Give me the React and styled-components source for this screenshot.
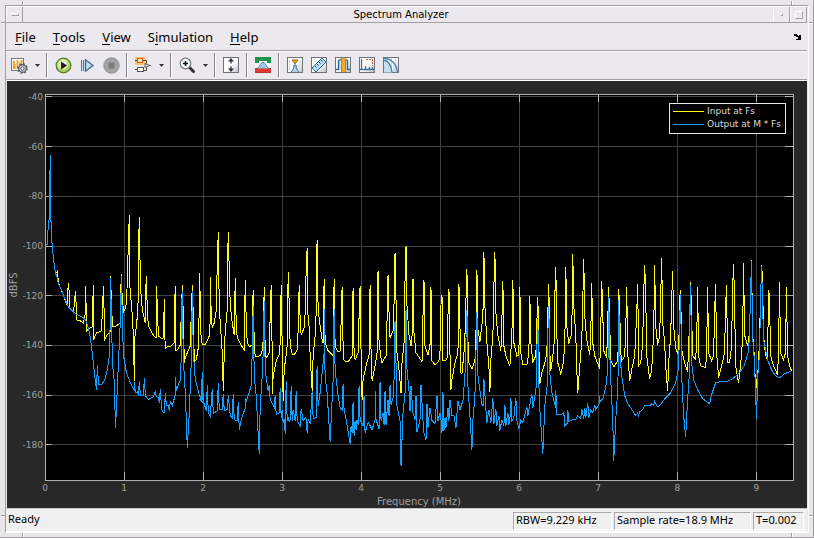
import React from "react";
import styled, { createGlobalStyle } from "styled-components";

const GlobalStyle = createGlobalStyle`
  * { box-sizing: border-box; }
  body { margin: 0; background: #e6e4e6; }
`;

const shade = "#a09da3";
const face = "#ebe8ee";

const Frame = styled.main`
  position: relative;
  display: flex;
  min-height: 100vh;
  padding: 5px 4px 4px 5px;
  border-right: 1px solid ${shade};
  border-bottom: 1px solid ${shade};
  background: #e8e6e9;
  font-family: "Noto Sans", sans-serif;
  color: #000;
`;

const Notch = styled.i`
  position: absolute;
  width: ${(p) => (p.$across ? 4 : 2)}px;
  height: ${(p) => (p.$across ? 2 : 4)}px;
  top: ${(p) => p.$top};
  left: ${(p) => p.$left};
  background: linear-gradient(${(p) => (p.$across ? "180deg" : "90deg")}, ${shade} 50%, #fff 50%);
`;

const Window = styled.div`
  flex: 1;
  min-width: 0;
  display: flex;
  flex-direction: column;
  border: 1px solid #fff;
  border-top-color: ${shade};
  border-left-color: ${shade};
  padding-right: 1px;
  background: ${face};
`;

const TitleBar = styled.header`
  display: flex;
  height: 17px;
  border-top: 1px solid #fff;
  border-bottom: 1px solid ${shade};
`;

const Title = styled.h1`
  flex: 1;
  margin: 0;
  padding-left: 6px;
  text-align: center;
  font: 10px/15px "DejaVu Sans", sans-serif;
`;

const FrameButton = styled.button`
  display: grid;
  place-items: center;
  width: 17px;
  height: 15px;
  padding: 0;
  border: 0 solid;
  border-width: 0 1px;
  border-color: #fff ${shade} #fff #fff;
  background: ${face};
`;

const Glyph = styled.span`
  width: ${(p) => p.$w}px;
  height: ${(p) => p.$h}px;
  border: 1px solid;
  border-color: #fff ${shade} ${shade} #fff;
`;

const MenuBar = styled.nav`
  display: flex;
  align-items: center;
  height: 28px;
  padding: 0 6px 0 9px;
  gap: 17px;
  border-bottom: 1px solid ${shade};
`;

const MenuItem = styled.button`
  padding: 0;
  border: 0;
  background: none;
  font: 13px/20px "Noto Sans", sans-serif;
  color: #000;
  u {
    display: inline-block;
    line-height: 14px;
    text-decoration: none;
    border-bottom: 1px solid #000;
  }
`;

const DockButton = styled(MenuItem)`
  margin-left: auto;
  display: grid;
`;

const ToolBar = styled.div`
  display: flex;
  align-items: center;
  height: 30px;
  padding: 0 0 2px 1px;
  border-top: 1px solid #fff;
  border-bottom: 1px solid #fff;
  box-shadow: inset 0 -1px ${shade};
`;

const Tool = styled.button`
  display: grid;
  place-items: center;
  width: ${(p) => (p.$menu ? 12 : 24)}px;
  height: 24px;
  padding: 0;
  border: 0;
  background: none;
`;

const Separator = styled.span`
  width: 2px;
  height: 24px;
  margin: 0 3px;
  border-left: 1px solid #858288;
  border-right: 1px solid #fff;
`;

const Scope = styled.section`
  flex: 1;
  display: grid;
  grid-template: 13px minmax(200px, 1fr) 28px / 38px 1fr 14px;
  margin-left: 1px;
  background: #282828;
`;

const Axis = styled.svg`
  display: block;
  width: 100%;
  height: 100%;
  min-height: 0;
  overflow: visible;
  font: 9px "DejaVu Sans", sans-serif;
  fill: #a0a0a0;
  grid-area: ${(p) => p.$area};
`;

const Plot = styled.div`
  grid-area: 2 / 2;
  position: relative;
  background: #000;
`;

const Canvas = styled.svg`
  position: absolute;
  inset: 0;
  width: 100%;
  height: 100%;
  overflow: visible;
  shape-rendering: crispEdges;
`;

const Legend = styled.ul`
  position: absolute;
  top: 9px;
  right: 7px;
  margin: 0;
  padding: 1px 4px 2px 3px;
  list-style: none;
  border: 1px solid #e6e6e6;
  background: #000;
  color: #ddd;
  font: 9px/13px "DejaVu Sans", sans-serif;
`;

const LegendItem = styled.li`
  display: flex;
  align-items: center;
  gap: 3px;
  &::before {
    content: "";
    width: 31px;
    height: 1px;
    background: ${(p) => p.$color};
  }
`;

const StatusBar = styled.footer`
  display: flex;
  align-items: flex-start;
  gap: 2px;
  height: 24px;
  padding: 3px 3px 0 2px;
  border-top: 1px solid #c4c2c6;
  border-bottom: 1px solid #fff;
  background: #f0f0f0;
  font-size: 11px;
  line-height: 14px;
`;

const StatusText = styled.span`
  flex: 1;
`;

const StatusBox = styled.span`
  width: ${(p) => p.$w}px;
  height: 18px;
  padding-left: 2px;
  border: 1px solid;
  border-color: #aaa #fff #fff #aaa;
  white-space: nowrap;
`;

/* Trace samples, in runs of "x,y" pairs on a grid three times finer than the plot. */
const inputRuns = [
  [0, 85, "137,480 142,478 143,450 146,420 149,390 149,306 152,212 152,410 155,412 155,462 158,488 161,527 164,543 167,567 173,559 173,570 176,585"],
  [0, 280, "176,10 182,25 190,45 197,68 201,78 203,40 206,10 207,50 209,85 220,97 224,70 227,33 228,90 230,120 240,125 251,130 256,100 257,18 259,110 260,155 266,147 276,143 278,95 281,15 281,182 285,165 290,160 303,153 308,95 311,18 312,130 314,185 320,168 330,158 332,-12 335,60 337,142 350,138 360,130 362,60 364,-18 365,25 368,50 370,100 376,85 380,70 383,0 386,-120 389,-195 389,0 392,40 396,110 400,170 403,304 404,185 408,140 412,110 414,50 416,-90 419,-189 420,10 424,60 428,90 434,118 436,130 437,60 440,-10 442,100 446,138 455,158 464,172 470,176 470,20 473,80 474,170 486,178 491,175 493,58 494,130 496,208 503,203 515,200 522,190 524,100 526,18 527,215 533,212 540,195 542,170 545,110 548,15 549,110 552,250 556,235 562,220 572,200 574,100 577,15 579,110 582,247 588,240 594,205 597,80 599,-20"],
  [200, 220, "0,235 2,330 8,375 16,375 28,350 30,300 31,172 34,290 37,325 43,310 50,270 52,130 55,37 57,265 62,310 66,400 70,515 73,400 77,335 81,270 82,170 86,37 87,150 90,260 96,310 104,345 107,175 109,320 113,355 122,373 134,390 137,180 139,300 142,370 148,383 156,375 158,290 160,210 162,370 166,413 180,408 188,395 190,360 193,202 195,400 199,415 208,400 212,290 214,195 216,400 218,523 221,470 230,425 238,405 242,370 244,195 246,380 250,543 252,450 258,405 263,380 265,157 268,250 271,380 276,403 284,405 292,390 296,330 298,195 301,300 304,345 312,325 317,280 318,150 322,85 323,260 328,325 332,410 337,515 340,410 345,350 349,280 350,155 353,61 355,270 361,320 366,360 371,370 374,178 376,370 385,393 401,410 404,178 406,380 414,398 422,395 425,310 427,202 430,380 433,425 444,427 456,410 458,310 460,205 462,400 467,420 475,400 478,290 481,198 484,400 487,540 490,480 498,440 508,405 511,195 514,400 518,485 525,440 531,400 533,250 536,153 537,370 543,415 548,430 560,410 562,300 565,165 568,280 571,355 579,335 584,250 586,100 589,240 592,400 598,450 604,520 608,430 614,370 617,180"],
  [400, 220, "19,78 22,260 27,345 35,380 38,350 40,178 43,340 50,400 66,427 70,290 73,180 76,380 86,405 92,380 94,202 96,400 98,425 106,436 118,425 123,370 125,255 127,225 129,375 131,423 142,420 146,290 149,208 152,400 154,512 158,480 166,430 176,400 178,192 182,320 184,460 187,463 192,400 197,350 200,240 202,148 205,360 209,430 217,447 226,425 230,350 232,150 236,330 242,367 250,290 253,97 257,260 262,370 267,440 270,517 275,420 280,350 283,200 286,97 290,280 294,350 303,393 308,300 310,183 313,380 320,410 332,440 338,350 340,180 343,370 351,410 358,405 361,202 364,400 370,437 382,436 388,400 391,228 395,370 400,427 408,410 413,310 415,232 418,380 422,492 427,460 436,430 442,400 446,280 448,193 450,400 454,455 460,410 465,350 467,230 469,142 472,340 476,430 484,463 490,440 496,380 499,142 503,320 509,373 516,340 520,103 524,260 528,350 532,450 536,520 540,440 546,360 551,240 553,118 557,290 563,360 571,405 575,340 577,190 580,370 586,410"],
  [600, 220, "0,447 4,330 7,183 10,280 13,395 22,415 26,300 28,202 31,320 34,425 44,443 54,425 57,330 58,208 62,270 65,400 68,425 76,410 80,330 82,202 85,400 90,485 96,450 106,410 112,280 115,192 118,440 124,430 131,370 134,220 136,136 139,220 142,410 152,478 158,450 163,340 166,136 169,320 176,375 182,350 187,115 190,310 196,370 200,440 206,515 209,430 214,350 218,240 220,153 224,320 230,385 238,410 241,235 244,210 247,390 255,430 266,458 271,300 274,187 277,290 281,410 290,420 293,370 295,202 298,410 304,440 318,445 323,400 325,202 329,400 336,425 344,410 347,280 349,193 353,400 358,475 366,440 376,400 379,260 382,195 385,430 390,430 397,380 400,205 403,133 406,240 410,440 418,490 425,440 431,360 433,130 436,345 445,378 450,340 454,215 457,121 460,340 467,420 470,517 477,440 482,350 485,240 487,136 490,175 494,350 500,405 506,420 508,210 511,230 514,410 524,440 534,467 539,400 541,187 544,400 553,420 560,400 562,202 565,410 572,440 578,455"],
];

const outputRuns = [
  [0, 85, "137,480 142,478 143,450 146,420 149,390 149,306 152,210 152,410 155,412 155,462 158,488 161,527 164,543 167,567 170,570 173,583"],
  [0, 280, "176,12 184,32 194,55 206,82 220,97 232,107 250,115 256,120 266,145 272,175 278,225 284,280 290,330 293,257 296,315 303,317 312,305 322,270 328,225 331,100 332,-5 335,100 338,250 343,310 346,445 350,390 356,250 361,120 364,-10 366,130 370,225 380,280 390,310 403,335 404,308 405,340 412,338 416,350 418,305 421,350 430,350 433,295 436,350 446,360 460,352 467,335 469,352 476,355 478,370 481,328 484,380 488,398 494,400 496,340 499,380 505,380 509,395 512,363 516,380 526,345 527,292 530,335 540,300 544,230 545,100 548,35 550,240 556,340 562,505 567,400 573,240 577,35 580,220 587,300 598,345 604,360 607,277 611,370"],
  [200, 220, "0,540 7,540 8,457 10,545 18,575 22,495 25,580 31,592 37,508 41,583 53,575 55,490 58,570 68,572 70,522 73,575 82,570 86,530 90,590 97,595 100,522 104,600 112,605 115,548 118,630 126,590 137,568 137,535 140,548 148,520 153,495 157,400 160,260 163,470 170,530 178,703 180,560 187,470 190,400 193,245 196,455 206,515 208,495 212,540 222,565 225,525 230,587 238,580 241,505 244,595 247,570 250,610 253,598 256,642 259,485 262,605 265,593 268,608 271,600 274,498 278,605 281,570 286,605 289,515 293,605 301,618 304,567 310,605 316,595 320,600 322,640 325,600 331,610 337,515 340,598 348,595 349,513 352,438 355,560 362,520 368,460 373,400 374,267 377,475 383,520 390,667 397,540 400,480 403,267 407,450 416,530 422,565 427,570 430,493 433,570 440,600 451,672 454,620 458,640 460,547 463,650 466,605 469,630 472,600 475,615 478,500 482,600 490,620 493,530 497,640 505,610 511,620 517,632 526,600 526,513 530,600 538,628 542,487 545,605 550,580 553,615 556,515 560,615 566,540 568,590 571,497 575,555 580,535 584,480 587,305 591,560 598,590"],
  [400, 220, "1,603 4,740 9,580 15,520 19,270 22,450 28,515 31,575 34,500 37,540 40,580 47,600 49,530 53,637 60,600 65,495 69,605 73,640 79,660 82,553 86,625 91,565 97,605 106,612 112,528 115,605 120,580 125,600 127,640 130,518 133,635 137,595 140,625 145,565 148,605 152,540 156,590 163,590 169,625 175,545 180,572 190,545 196,470 200,360 202,270 206,500 212,590 218,690 221,600 227,530 232,277 236,470 246,555 254,560 254,477 258,570 263,610 268,570 275,610 280,535 283,612 290,568 293,618 298,590 301,633 307,600 313,618 316,555 320,620 325,580 328,615 331,600 334,535 337,605 344,595 349,535 352,605 358,628 364,600 371,610 382,563 385,590 397,522 400,565 406,530 412,490 413,390 415,298 418,490 422,570 430,703 437,560 444,480 445,340 448,258 451,460 457,520 468,565 470,515 473,585 485,585 493,580 496,620 506,610 506,570 509,608 520,600 530,600 536,590 544,597 548,568 552,597 556,565 560,595 565,550 568,595 575,570 580,580 585,555 590,570 600,550 601,530"],
  [600, 220, "2,548 10,538 20,505 25,450 27,320 28,232 31,400 34,480 40,600 43,725 49,600 54,510 57,370 58,240 61,400 66,470 75,530 86,553 100,575 110,588 114,580 117,590 120,578 130,570 137,558 152,560 158,554 163,558 166,548 172,560 178,562 190,548 200,535 213,520 228,490 237,445 240,300 244,222 247,470 254,590 259,653 264,540 271,450 272,290 274,195 277,430 284,480 295,510 310,538 330,553 336,525 350,490 360,486 382,487 400,478 420,460 436,435 448,395 452,340 455,215 457,123 460,350 466,430 469,520 472,598 475,480 480,400 485,240 487,138 490,240 494,360 505,420 516,450 530,468 542,475 556,463 570,457 578,455"],
];

const toPoints = (runs) =>
  runs
    .flatMap(([x0, y0, samples]) =>
      samples.split(" ").map((pair) => {
        const [x, y] = pair.split(",").map(Number);
        return `${x0 - 45 + Math.floor(x / 3) + 0.5},${y0 - 94 + Math.floor(y / 3) + 0.5}`;
      })
    )
    .join(" ");

const pct = (value, total) => `${(value / total) * 100}%`;
const xTicks = [0, 1, 2, 3, 4, 5, 6, 7, 8, 9].map((n) => ({ label: n, at: pct(n * 79.14, 749) }));
const yTicks = [-40, -60, -80, -100, -120, -140, -160, -180].map((n, i) => ({
  label: n,
  at: pct(3 + i * 49.8, 387),
}));

const SpectrumPlot = () => (
  <Plot>
    <Canvas role="img" aria-label="Power spectrum of input and output">
      {xTicks.slice(1).map((t) => (
        <line key={t.label} x1={t.at} x2={t.at} y1="0" y2="100%" stroke="#424242" />
      ))}
      {yTicks.map((t) => (
        <line key={t.label} x1="0" x2="100%" y1={t.at} y2={t.at} stroke="#424242" />
      ))}
      <rect x="0" y="0" width="100%" height="100%" fill="none" stroke="#b0b0b0" />
      {xTicks.slice(1).map((t) => (
        <g key={t.label} stroke="#b0b0b0">
          <line x1={t.at} x2={t.at} y1="0" y2="8" />
          <svg y="100%" overflow="visible">
            <line x1={t.at} x2={t.at} y1="-8" y2="0" />
          </svg>
        </g>
      ))}
      {yTicks.map((t) => (
        <g key={t.label} stroke="#b0b0b0">
          <line x1="0" x2="7" y1={t.at} y2={t.at} />
          <svg x="100%" overflow="visible">
            <line x1="-8" x2="0" y1={t.at} y2={t.at} />
          </svg>
        </g>
      ))}
      <svg width="100%" height="100%" viewBox="0 0 749 387" preserveAspectRatio="none">
        <polyline points={toPoints(inputRuns)} fill="none" stroke="#ffff11" vectorEffect="non-scaling-stroke" />
        <polyline points={toPoints(outputRuns)} fill="none" stroke="#139fff" vectorEffect="non-scaling-stroke" />
      </svg>
    </Canvas>
    <Legend>
      <LegendItem $color="#ffff11">Input at Fs</LegendItem>
      <LegendItem $color="#139fff">Output at M * Fs</LegendItem>
    </Legend>
  </Plot>
);

const Icon = ({ children }) => (
  <svg width="17" height="17" viewBox="0 0 17 17" fill="none" aria-hidden="true">
    {children}
  </svg>
);

const Tile = ({ children }) => (
  <Icon>
    <defs>
      <linearGradient id="tile" x1="0" y1="0" x2="1" y2="1">
        <stop offset="0" stopColor="#fff" />
        <stop offset="0.5" stopColor="#fff" />
        <stop offset="1" stopColor="#bfc3c8" />
      </linearGradient>
    </defs>
    <rect x="0.5" y="0.5" width="15" height="15" fill="url(#tile)" stroke="#6f7377" />
    {children}
  </Icon>
);

const Caret = () => (
  <svg width="5" height="3" viewBox="0 0 5 3" aria-hidden="true">
    <path d="M0 0h5L2.500 3z" fill="#333" />
  </svg>
);

const SettingsIcon = () => (
  <Icon>
    <rect x="0.5" y="1.500" width="12" height="12" fill="#fff" stroke="#777" />
    <path d="M3 4v8M6.500 3v9M10.500 3v6" stroke="#eda02c" strokeWidth="2" />
    <path d="M4.500 7v5M8.500 5v5" stroke="#f4bd62" />
    <circle cx="11.500" cy="11.500" r="3.800" fill="#c9cdd1" stroke="#50565b" strokeWidth="1.200" />
    <circle cx="11.500" cy="11.500" r="4.700" stroke="#50565b" strokeWidth="1.300" strokeDasharray="1.800 1.890" />
    <circle cx="11.500" cy="11.500" r="1.600" fill="#fff" stroke="#50565b" />
  </Icon>
);

const RunIcon = () => (
  <Icon>
    <defs>
      <radialGradient id="run" cx="0.45" cy="0.4" r="0.6">
        <stop offset="0" stopColor="#fff" />
        <stop offset="0.45" stopColor="#dcefa8" />
        <stop offset="1" stopColor="#87b83e" />
      </radialGradient>
    </defs>
    <circle cx="8.500" cy="8.500" r="7.300" fill="url(#run)" stroke="#547f2b" strokeWidth="1.300" />
    <path d="M6 4.500 12 8.500 6 12.500z" fill="#222" />
  </Icon>
);

const StepIcon = () => (
  <Icon>
    <path d="M2.500 3v11M4.500 3v11" stroke="#54809f" />
    <path d="M3.500 3v11" stroke="#bfe0f5" />
    <path d="M6.500 2.800 14 8.500 6.500 14.200z" fill="#b8dcf3" stroke="#3d6c8f" strokeWidth="1.300" />
  </Icon>
);

const StopIcon = () => (
  <Icon>
    <circle cx="8.500" cy="8.500" r="7.700" fill="#a3a3a3" stroke="#8f8f8f" />
    <rect x="5.500" y="5.500" width="6" height="6" fill="#7c7c7c" />
  </Icon>
);

const ModelIcon = () => (
  <Icon>
    <rect x="0" y="0" width="10" height="8" rx="1" fill="#ffc35c" />
    <rect x="2.500" y="1.500" width="5" height="4" fill="#ffe6c0" stroke="#c55a1c" />
    <path d="M8 3.500h3.500v3M8 13.500h3.500v-3M0 12.500h3M0 3.500h2M14 8.500h2" stroke="#444" />
    <rect x="2.500" y="10.500" width="6" height="4" fill="#fff" stroke="#555" />
    <path d="M10 6.500 14.500 8.500 10 10.500z" fill="#fff" stroke="#555" />
  </Icon>
);

const ZoomIcon = () => (
  <Icon>
    <path d="m10.500 10.500 4 4" stroke="#333" strokeWidth="3" strokeLinecap="round" />
    <circle cx="6.500" cy="6.500" r="5.300" fill="#eff8fc" stroke="#777" strokeWidth="1.200" />
    <path d="M4 6.500h5M6.500 4v5" stroke="#111" strokeWidth="1.500" />
  </Icon>
);

const FitIcon = () => (
  <Tile>
    <path d="M8 1 5 4.500h6zM8 15 5 11.500h6z" fill="#333" />
    <path d="M8 4v2.500M8 9.500v2.500" stroke="#333" strokeWidth="1.300" />
  </Tile>
);

const SpectrumIcon = () => (
  <Icon>
    <path d="M0 0h16v16H0z" fill="#fff" />
    <path d="M0 0h16v6h-4V4H4v2H0z" fill="#21934a" />
    <path d="M0 11.500h2C5 10.500 5 5.500 8 5.500s3 5 6 6h2" fill="#b8d6ed" stroke="#4a7ba6" />
    <path d="M8 6v5M6 8v3M10 8v3" stroke="#87b2d4" />
    <path d="M0 12h16v4H0z" fill="#dc3a30" />
    <path d="M0 11.500h16M0 15.500h16" stroke="#a52c28" strokeOpacity="0.600" />
  </Icon>
);

const PeakIcon = () => (
  <Tile>
    <path d="M2.500 3v10M13.500 3v10" stroke="#ddd" />
    <path d="M4 15c2-2 3-4 3-7h2c0 3 1 5 3 7" fill="#b9cfe2" stroke="#3f6e98" />
    <path d="M5 3h6L8 7z" fill="#e9aa28" stroke="#95681b" />
  </Tile>
);

const RulerIcon = () => (
  <Tile>
    <path d="M1 11 11 1l4 4L5 15z" fill="#b8daf0" stroke="#376b8b" />
    <path d="m4 9 1.500 1.500M6 7l1.500 1.500M8 5l1.500 1.500M10 3l1.500 1.500" stroke="#244f6d" />
  </Tile>
);

const ChannelIcon = () => (
  <Tile>
    <path d="M1 12.500h2.500V3.500c3-2 6-2 9 0v9H15" fill="#c8ddec" stroke="#35688e" strokeWidth="1.400" />
    <rect x="6" y="1" width="5" height="14" fill="#f8a91d" />
    <path d="M6.500 2v13M10.500 2v13" stroke="#d48313" />
  </Tile>
);

const DistortionIcon = () => (
  <Tile>
    <path d="M2.500 2v11M6.500 13V9M10.500 13v-3M13.500 13v-3M1 12.500h14" stroke="#3f7099" strokeWidth="1.300" />
    <path d="M7 2.500h7M13.500 2v7" stroke="#c55b37" strokeDasharray="2 1" />
  </Tile>
);

const CcdfIcon = () => (
  <Tile>
    <path d="M4.500 1v14M8.500 1v14M12.500 1v14" stroke="#d2d7db" />
    <path d="M1 3.500c5 0 7 4 8 12H1z" fill="#c5dff0" />
    <path d="M1 3.500c5 0 7 4 8 12M1 1.500c7 0 12 5 13.500 14" stroke="#4485b4" strokeWidth="1.300" />
  </Tile>
);

const App = () => (
  <>
    <GlobalStyle />
    <Frame>
      <Notch $across $top="22px" $left="1px" />
      <Notch $across $top="22px" $left="calc(100% - 4px)" />
      <Notch $across $top="calc(100% - 22px)" $left="1px" />
      <Notch $across $top="calc(100% - 22px)" $left="calc(100% - 4px)" />
      <Notch $top="1px" $left="22px" />
      <Notch $top="1px" $left="calc(100% - 22px)" />
      <Notch $top="calc(100% - 4px)" $left="22px" />
      <Notch $top="calc(100% - 4px)" $left="calc(100% - 22px)" />
      <Window>
        <TitleBar>
          <FrameButton aria-label="Window menu"><Glyph $w={8} $h={3} /></FrameButton>
          <Title>Spectrum Analyzer</Title>
          <FrameButton aria-label="Minimize"><Glyph $w={3} $h={3} /></FrameButton>
          <FrameButton aria-label="Maximize"><Glyph $w={8} $h={8} /></FrameButton>
        </TitleBar>
        <MenuBar>
          <MenuItem><u>F</u>ile</MenuItem>
          <MenuItem><u>T</u>ools</MenuItem>
          <MenuItem><u>V</u>iew</MenuItem>
          <MenuItem>S<u>i</u>mulation</MenuItem>
          <MenuItem><u>H</u>elp</MenuItem>
          <DockButton aria-label="Dock">
            <svg width="7" height="6" viewBox="0 0 7 6" aria-hidden="true">
              <path d="M0 0h3v1h1v1h1V1h2v5H2V5h2V3H2V2H0z" fill="#000" />
            </svg>
          </DockButton>
        </MenuBar>
        <ToolBar role="toolbar">
          <Tool aria-label="Configuration"><SettingsIcon /></Tool>
          <Tool $menu aria-label="Configuration menu"><Caret /></Tool>
          <Separator />
          <Tool aria-label="Run"><RunIcon /></Tool>
          <Tool aria-label="Step forward"><StepIcon /></Tool>
          <Tool aria-label="Stop"><StopIcon /></Tool>
          <Separator />
          <Tool aria-label="Highlight block"><ModelIcon /></Tool>
          <Tool $menu aria-label="Block menu"><Caret /></Tool>
          <Separator />
          <Tool aria-label="Zoom"><ZoomIcon /></Tool>
          <Tool $menu aria-label="Zoom menu"><Caret /></Tool>
          <Separator />
          <Tool aria-label="Scale axes"><FitIcon /></Tool>
          <Separator />
          <Tool aria-label="Spectral mask"><SpectrumIcon /></Tool>
          <Separator />
          <Tool aria-label="Peak finder"><PeakIcon /></Tool>
          <Tool aria-label="Cursor measurements"><RulerIcon /></Tool>
          <Tool aria-label="Channel measurements"><ChannelIcon /></Tool>
          <Tool aria-label="Distortion measurements"><DistortionIcon /></Tool>
          <Tool aria-label="CCDF measurements"><CcdfIcon /></Tool>
        </ToolBar>
        <Scope>
          <Axis $area="2 / 1">
            {yTicks.map((t) => (
              <text key={t.label} x="36" y={t.at} dy="3" textAnchor="end">{t.label}</text>
            ))}
            <svg y="50%" overflow="visible">
              <text fontSize="10" textAnchor="middle" transform="translate(10 -2) rotate(-90)">dBFS</text>
            </svg>
          </Axis>
          <SpectrumPlot />
          <Axis $area="3 / 2">
            {xTicks.map((t) => (
              <text key={t.label} x={t.at} y="11" textAnchor="middle">{t.label}</text>
            ))}
            <text x="50%" y="25" fontSize="10" textAnchor="middle">Frequency (MHz)</text>
          </Axis>
        </Scope>
        <StatusBar>
          <StatusText>Ready</StatusText>
          <StatusBox $w={99}>RBW=9.229 kHz</StatusBox>
          <StatusBox $w={137}>Sample rate=18.9 MHz</StatusBox>
          <StatusBox $w={51}>T=0.002</StatusBox>
        </StatusBar>
      </Window>
    </Frame>
  </>
);

export default App;
